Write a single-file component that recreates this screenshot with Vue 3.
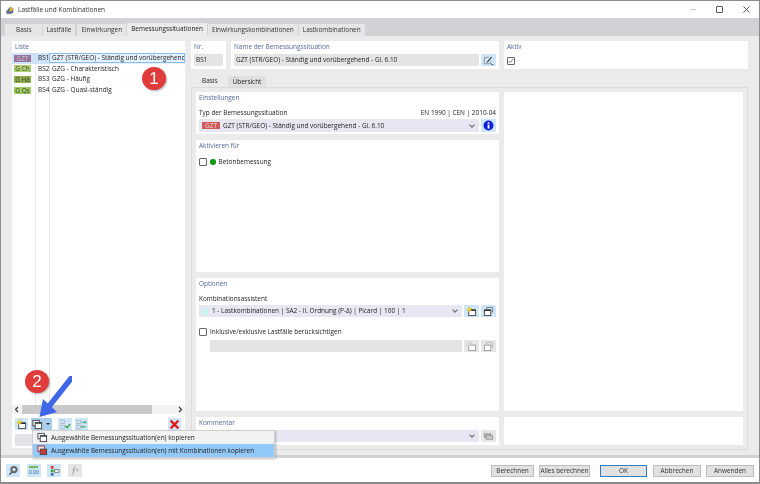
<script setup>
const tabs = ['Basis', 'Lastfälle', 'Einwirkungen', 'Bemessungssituationen', 'Einwirkungskombinationen', 'Lastkombinationen']
const rows = [
  { tag: 'GZT', color: '#96719a', nr: 'BS1', name: 'GZT (STR/GEO) - Ständig und vorübergehend' },
  { tag: 'G Ch', color: '#abd070', nr: 'BS2', name: 'GZG - Charakteristisch' },
  { tag: 'G Hä', color: '#8fb04c', nr: 'BS3', name: 'GZG - Häufig' },
  { tag: 'G Qs', color: '#a0cc60', nr: 'BS4', name: 'GZG - Quasi-ständig' }
]
</script>

<template>
  <div class="window">
    <div class="titlebar">
      <svg class="appicon" viewBox="0 0 12 12">
        <path d="M1 8l5-6 4 2v5l-4 2z" fill="#4a6f9c" />
        <path d="M6 2l4 2-2 4-3-1z" fill="#e4b03c" />
        <circle cx="3.5" cy="9" r="2" fill="#7d7d80" />
      </svg>
      <span class="title">Lastfälle und Kombinationen</span>
      <div class="winbtns">
        <span class="wmin"></span>
        <span class="wmax"></span>
        <svg class="wclose" viewBox="0 0 8 8"><path d="M.5.5l7 7M7.5.5l-7 7" stroke="#444" fill="none" /></svg>
      </div>
    </div>

    <div class="tabbar">
      <span v-for="t in tabs" :key="t" class="tab" :class="{ on: t === 'Bemessungssituationen' }">{{ t }}</span>
    </div>

    <div class="content">
      <div class="left">
        <div class="head liste">Liste</div>
        <div class="list">
          <div v-for="(r, i) in rows" :key="r.nr" class="lrow" :class="{ sel: i === 0 }">
            <span class="ltag"><span class="tag" :style="{ background: r.color }">{{ r.tag }}</span></span>
            <span class="lnr">{{ r.nr }}</span>
            <span class="lname">{{ r.name }}</span>
          </div>
        </div>
        <div class="hscroll">
          <svg class="arr" viewBox="0 0 10 9"><path d="M6 2L3.500 4.500 6 7" fill="none" stroke="#333" stroke-width="1.100" /></svg>
          <div class="track"><div class="thumb"></div></div>
          <svg class="arr" viewBox="0 0 10 9"><path d="M4 2l2.500 2.500L4 7" fill="none" stroke="#333" stroke-width="1.100" /></svg>
        </div>
        <div class="ltools">
          <span class="ibtn">
            <svg viewBox="0 0 12 12"><rect x="3" y="4.500" width="7.500" height="6" fill="#fff" stroke="#444" /><path d="M3 4.500h7.500" stroke="#222" stroke-width="1.500" /><path d="M3.500.5l.8 1.900 2-.3-1.200 1.600 1 1.800-2-.5-1.400 1.500-.2-2L.6 3.700l1.900-.8z" fill="#f5dc2e" stroke="#c9a81c" stroke-width=".3" /></svg>
          </span>
          <span class="ibtn split">
            <svg viewBox="0 0 12 12"><rect x="1" y="1.500" width="7" height="6" fill="#fff" stroke="#444" /><rect x="3.500" y="4" width="7" height="6.500" fill="#fff" stroke="#444" /><path d="M3.500 4.500h7" stroke="#222" stroke-width="1.200" /></svg>
            <i class="caret"></i>
          </span>
          <span class="ibtn mlarge">
            <svg viewBox="0 0 12 12"><path d="M1 1.500h4v3.500H1zM1 7h4v3.500H1z" fill="none" stroke="#888" stroke-width=".7" stroke-dasharray="1 .6" /><path d="M6 7.500l1.800 2 3.200-4" fill="none" stroke="#2a9a2a" stroke-width="1.300" /></svg>
          </span>
          <span class="ibtn">
            <svg viewBox="0 0 12 12"><path d="M1 1.500h4v3.500H1zM1 7h4v3.500H1z" fill="none" stroke="#888" stroke-width=".7" stroke-dasharray="1 .6" /><path d="M6 3.500h5M6 8.500h5M9.500 2l1.500 1.500-1.500 1.500M7.500 7L6 8.500 7.500 10" fill="none" stroke="#2a9a4a" stroke-width=".9" /></svg>
          </span>
          <span class="ibtn del">
            <svg viewBox="0 0 10 10"><path d="M1.500 1.500l7 7M8.500 1.500l-7 7" stroke="#e01818" stroke-width="2" /></svg>
          </span>
        </div>
        <div class="lfoot"><span class="lfootbtn"></span></div>
      </div>

      <div class="right">
        <div class="toprow">
          <div class="panel pnr">
            <div class="head">Nr.</div>
            <div class="field">BS1</div>
          </div>
          <div class="panel pname">
            <div class="head">Name der Bemessungssituation</div>
            <div class="line">
              <div class="field grow">GZT (STR/GEO) - Ständig und vorübergehend - Gl. 6.10</div>
              <span class="ibtn">
                <svg viewBox="0 0 12 12"><path d="M6.500 2.500h-5v7h7V7" fill="none" stroke="#777" stroke-width=".8" /><path d="M4.500 8l5-6" stroke="#333" stroke-width="1.100" /><path d="M9 10.500h2.500" stroke="#333" stroke-width=".8" /></svg>
              </span>
            </div>
          </div>
          <div class="panel paktiv">
            <div class="head">Aktiv</div>
            <span class="check checked">
              <svg viewBox="0 0 8 8"><path d="M1 4l2 2 4-5" fill="none" stroke="#444" /></svg>
            </span>
          </div>
        </div>

        <div class="subtabs">
          <span class="stab on">Basis</span>
          <span class="stab">Übersicht</span>
        </div>

        <div class="tabbody">
          <div class="cols">
            <div class="colmain">
              <div class="panel einst">
                <div class="head">Einstellungen</div>
                <div class="labelline"><span>Typ der Bemessungssituation</span><span>EN 1990 | CEN | 2010-04</span></div>
                <div class="line">
                  <div class="combo grow tall">
                    <span class="tag red">GZT</span>
                    <span class="ctext">GZT (STR/GEO) - Ständig und vorübergehend - Gl. 6.10</span>
                    <i class="chev"></i>
                  </div>
                  <span class="ibtn tall">
                    <svg viewBox="0 0 12 12"><circle cx="6" cy="6" r="5.400" fill="#0b1fd8" /><rect x="5" y="5" width="2" height="4.400" fill="#fff" /><rect x="5" y="2.500" width="2" height="1.600" fill="#fff" /></svg>
                  </span>
                </div>
              </div>

              <div class="panel aktiv">
                <div class="head">Aktivieren für</div>
                <div class="checkline">
                  <span class="check"></span>
                  <i class="dot"></i>
                  <span>Betonbemessung</span>
                </div>
              </div>

              <div class="panel optionen">
                <div class="head">Optionen</div>
                <div class="label">Kombinationsassistent</div>
                <div class="line kombi">
                  <div class="combo grow">
                    <i class="swatch"></i>
                    <span class="ctext wide">1 - Lastkombinationen | SA2 - II. Ordnung (P-Δ) | Picard | 100 | 1</span>
                    <i class="chev"></i>
                  </div>
                  <span class="ibtn">
                    <svg viewBox="0 0 12 12"><rect x="3" y="4.500" width="7.500" height="6" fill="#fff" stroke="#444" /><path d="M3 4.500h7.500" stroke="#222" stroke-width="1.500" /><path d="M3.500.5l.8 1.900 2-.3-1.200 1.600 1 1.800-2-.5-1.400 1.500-.2-2L.6 3.700l1.900-.8z" fill="#f5dc2e" stroke="#c9a81c" stroke-width=".3" /></svg>
                  </span>
                  <span class="ibtn">
                    <svg viewBox="0 0 12 12"><rect x="1.500" y="4.500" width="7" height="6" fill="#fff" stroke="#444" /><path d="M1.500 4.500h7" stroke="#222" stroke-width="1.500" /><path d="M4 3V1.500h6.500v5H9" fill="none" stroke="#555" stroke-width=".8" /></svg>
                  </span>
                </div>
                <div class="checkline incl">
                  <span class="check"></span>
                  <span>Inklusive/exklusive Lastfälle berücksichtigen</span>
                </div>
                <div class="line indent">
                  <div class="field grow"></div>
                  <span class="ibtn off">
                    <svg viewBox="0 0 12 12"><rect x="3" y="4.500" width="7.500" height="6" fill="#fff" stroke="#999" /><path d="M3.500.5l.8 1.900 2-.3-1.200 1.600 1 1.800-2-.5-1.400 1.500-.2-2L.6 3.700l1.900-.8z" fill="#ddd" stroke="#aaa" stroke-width=".3" /></svg>
                  </span>
                  <span class="ibtn off">
                    <svg viewBox="0 0 12 12"><rect x="1.500" y="4.500" width="7" height="6" fill="#fff" stroke="#999" /><path d="M4 3V1.500h6.500v5H9" fill="none" stroke="#aaa" stroke-width=".8" /></svg>
                  </span>
                </div>
              </div>

              <div class="panel komm">
                <div class="head">Kommentar</div>
                <div class="line">
                  <div class="combo grow"><i class="chev"></i></div>
                  <span class="ibtn off">
                    <svg viewBox="0 0 12 12"><rect x="1.500" y="3" width="7" height="4" fill="#bbb" stroke="#999" /><rect x="3.500" y="5" width="7" height="4" fill="#ccc" stroke="#999" /></svg>
                  </span>
                </div>
              </div>
            </div>

            <div class="colside">
              <div class="panel sidetop"></div>
              <div class="panel sidebot"></div>
            </div>
          </div>
        </div>
      </div>
    </div>

    <div class="footer">
      <div class="ficons">
        <span class="ibtn">
          <svg viewBox="0 0 12 12"><circle cx="6.500" cy="5" r="4" fill="#666" /><circle cx="6.500" cy="5" r="1.800" fill="#d5e8f8" /><path d="M4 8l-2.500 2.500" stroke="#333" stroke-width="1.400" /></svg>
        </span>
        <span class="ibtn">
          <svg viewBox="0 0 12 12"><rect x="1" y="1" width="10" height="2.500" fill="#7cb860" /><text x="1" y="9.500" font-size="5.500" fill="#2a5e9a" font-family="Liberation Sans, sans-serif">0.00</text></svg>
        </span>
        <span class="ibtn">
          <svg viewBox="0 0 12 12"><rect x="2" y="1" width="3" height="3" fill="#d33" /><rect x="2" y="5" width="3" height="3" fill="#3a3" /><rect x="2" y="9" width="3" height="2.500" fill="#36b" /><path d="M6 5h5v3H6z" fill="#fff" stroke="#444" stroke-width=".7" /></svg>
        </span>
        <span class="ibtn off">
          <svg viewBox="0 0 12 12"><path d="M3 10.500c2 0 1.500-2 2-4.500s.5-4 2.500-4" fill="none" stroke="#999" /><path d="M3.500 5h3.500M8 4l2 3M10 4L8 7" stroke="#aaa" stroke-width=".8" fill="none" /></svg>
        </span>
      </div>
      <div class="fbtns">
        <span class="btn">Berechnen</span>
        <span class="btn all">Alles berechnen</span>
        <span class="btn ok">OK</span>
        <span class="btn act">Abbrechen</span>
        <span class="btn act">Anwenden</span>
      </div>
    </div>

    <!-- context menu and callouts lie over the dialog -->
    <div class="menu">
      <div class="mitem">
        <span class="micon">
          <svg viewBox="0 0 12 12"><rect x="1" y="1.500" width="7" height="6" fill="#fff" stroke="#445" /><rect x="3.500" y="4" width="7" height="6.500" fill="#fff" stroke="#445" /><path d="M3.500 4.500h7" stroke="#334" stroke-width="1.200" /></svg>
        </span>
        Ausgewählte Bemessungssituation(en) kopieren
      </div>
      <div class="mitem hot">
        <span class="micon">
          <svg viewBox="0 0 12 12"><rect x="1" y="1" width="7" height="6" fill="#e8e8f0" stroke="#b02a2a" /><rect x="3.500" y="4.500" width="7" height="6" fill="#c83a3a" stroke="#444" /></svg>
        </span>
        Ausgewählte Bemessungssituation(en) mit Kombinationen kopieren
      </div>
    </div>

    <span class="badge b1">1</span>
    <span class="badge b2">2</span>
    <svg class="arrow" viewBox="0 0 34 42">
      <path d="M33 2.500L12 29" stroke="#3f67e8" stroke-width="5.500" stroke-linecap="round" fill="none" />
      <path d="M1.500 41L5 23 19 36z" fill="#3f67e8" />
    </svg>
  </div>
</template>

<style>
html, body { margin: 0; background: #fff; }
</style>

<style scoped>
.window {
  position: relative;
  width: 760px;
  height: 484px;
  box-sizing: border-box;
  border: 1px solid #8c8c8c;
  border-bottom-width: 2px;
  display: flex;
  flex-direction: column;
  overflow: hidden;
  background: #fff;
  font-family: "Open Sans", "Noto Sans", sans-serif;
  font-size: 6.45px;
  color: #222;
  line-height: 10px;
  filter: blur(.3px);
}
svg { display: block; }

.titlebar {
  height: 17px;
  display: flex;
  align-items: center;
  padding-left: 4px;
  flex: none;
}
.appicon { width: 10px; height: 10px; margin-right: 3px; }
.title { font-size: 6.500px; color: #333; }
.winbtns { margin-left: auto; display: flex; align-items: center; gap: 20px; padding-right: 9px; }
.wmin { width: 6px; height: 1px; background: #ccc; }
.wmax { width: 5px; height: 5px; border: 1px solid #555; border-radius: 1px; }
.wclose { width: 7px; height: 7px; }

.tabbar {
  height: 18px;
  background: #d2d2d6;
  display: flex;
  align-items: flex-end;
  padding-left: 4px;
  flex: none;
}
.tab {
  height: 12px;
  line-height: 12px;
  padding: 0 4px;
  margin-right: 1px;
  background: #e6e6e6;
  color: #333;
}
.tab:nth-child(1) { padding: 0 10px 0 11px; }
.tab:nth-child(2) { margin-right: 2px; }
.tab.on { height: 13px; background: #ebebeb; color: #222; }

.content {
  flex: 1;
  min-height: 0;
  background: #ebebeb;
  display: flex;
  gap: 6px;
  padding: 5px 11px 5px 11px;
  border-bottom: 3px solid #d2d2d6;
}

.head { color: #55659a; height: 10px; }
.left {
  width: 173px;
  flex: none;
  background: #fff;
  display: flex;
  flex-direction: column;
  padding-top: 1px;
  margin-bottom: 2px;
}
.liste { padding-left: 3px; margin-bottom: 1px; }
.list {
  flex: 1;
  background: linear-gradient(to right, #fff 23px, #e8e8e8 23px, #e8e8e8 24px, #fff 24px, #fff 37px, #e8e8e8 37px, #e8e8e8 38px, #fff 38px);
  overflow: hidden;
}
.lrow { height: 10.6px; display: flex; align-items: center; white-space: nowrap; }
.lrow.sel { background: linear-gradient(to right, #cfe3f8 37px, #e5f1fc 37px); }
.ltag { width: 23px; flex: none; padding-left: 2px; box-sizing: border-box; }
.tag {
  display: block;
  width: 17px;
  height: 7px;
  line-height: 7px;
  font-size: 6.4px;
  text-align: center;
  color: #3f4030;
}
.lrow.sel .tag { color: #cfc6d0; }
.lnr { width: 14px; flex: none; padding-left: 3px; box-sizing: border-box; }
.lname { padding-left: 3px; flex: 1; min-width: 0; overflow: hidden; box-sizing: border-box; }
.lrow.sel .lname { outline: 1px solid #8bbbe6; outline-offset: -1px; }

.hscroll { height: 9px; display: flex; align-items: center; background: #f3f3f3; flex: none; }
.arr { width: 10px; height: 9px; flex: none; }
.track { flex: 1; height: 9px; }
.thumb { width: 130px; height: 9px; background: #c9c9c9; }

.ltools {
  height: 17px;
  flex: none;
  display: flex;
  align-items: center;
  padding: 3px 3px 0;
  box-sizing: border-box;
  gap: 3px;
}
.ibtn {
  width: 15px;
  height: 12px;
  background: #cfe6f9;
  display: flex;
  align-items: center;
  justify-content: center;
  flex: none;
}
.ibtn svg { width: 11px; height: 11px; }
.ibtn.off { background: #e6e6e6; }
.ltools .ibtn { width: 13px; }
.ltools .ibtn.split { width: 21px; background: #a9cfec; justify-content: flex-start; padding-left: 1px; box-sizing: border-box; gap: 3px; }
.caret { border: 2px solid transparent; border-top: 2.500px solid #222; border-bottom: 0; }
.ltools .mlarge { margin-left: 3px; width: 14px; }
.ltools .del { margin-left: auto; margin-right: 1px; }
.lfoot { height: 17px; flex: none; padding: 3px 3px 0; box-sizing: border-box; }
.lfootbtn { display: block; height: 12px; width: 150px; background: #e2e2e8; }

.right { flex: 1; min-width: 0; display: flex; flex-direction: column; }
.toprow { display: flex; gap: 5px; height: 28px; flex: none; }
.panel { background: #fff; box-sizing: border-box; padding: 1px 3px 0; }
.pnr { width: 35px; }
.pname { width: 268px; }
.paktiv { flex: 1; }
.line { display: flex; gap: 2px; align-items: center; }
.grow { flex: 1; min-width: 0; }
.field {
  height: 12px;
  line-height: 12px;
  margin-top: 2px;
  padding-left: 2px;
  background: #e4e4e4;
}
.line .field { margin-top: 0; }
.pname .line { margin-top: 2px; }
.check {
  display: inline-block;
  width: 6px;
  height: 6px;
  border: 1px solid #666;
  border-radius: 1px;
  background: #fff;
  flex: none;
}
.check svg { width: 6px; height: 6px; }
.checked { margin-top: 5px; }

.subtabs { height: 12px; margin-top: 6px; display: flex; align-items: flex-end; flex: none; }
.stab { height: 11px; line-height: 11px; padding: 0 5px; background: #e0e0e0; }
.stab.on { height: 12px; line-height: 12px; background: #ebebeb; padding: 0 10px 0 11px; }
.tabbody {
  flex: 1;
  min-height: 0;
  border: 1px solid #dcdcdc;
  padding: 4px;
  box-sizing: border-box;
}
.cols { display: flex; gap: 5px; height: 100%; }
.colmain { width: 303px; display: flex; flex-direction: column; gap: 6px; flex: none; }
.colside { flex: 1; display: flex; flex-direction: column; gap: 6px; }
.sidetop { flex: 1; }
.sidebot { height: 28px; flex: none; }

.einst { height: 42px; }
.labelline { display: flex; justify-content: space-between; margin-top: 5px; height: 10px; }
.label { margin-top: 5px; height: 10px; }
.einst .line { margin-top: 1px; }
.kombi { margin-top: 1px; }
.combo {
  height: 12px;
  background: #e6e7f2;
  display: flex;
  align-items: center;
  padding-left: 3px;
}
.tall { height: 13px; }
.ctext { margin-left: 3px; }
.ctext.wide { margin-left: 4px; }
.tag.red { background: #d0595c; color: #f3d6d6; width: 18px; }
.chev {
  margin-left: auto;
  margin-right: 5px;
  width: 3px;
  height: 3px;
  margin-top: -2px;
  border-right: 1px solid #666;
  border-bottom: 1px solid #666;
  transform: rotate(45deg);
}
.swatch { width: 6px; height: 7px; background: #cdf3f5; }
.aktiv { height: 132px; }
.checkline { display: flex; align-items: center; gap: 3px; margin-top: 6px; height: 10px; }
.dot { width: 5.500px; height: 5.500px; border-radius: 50%; background: #0f9a0f; }
.optionen { height: 133px; }
.incl { margin-top: 10px; }
.indent { margin-top: 3px; padding-left: 11px; }
.komm { flex: 1; }
.komm .line { margin-top: 2px; }

.footer {
  height: 24px;
  box-sizing: border-box;
  flex: none;
  display: flex;
  align-items: center;
  padding: 1px 5px 0;
}
.ficons { display: flex; gap: 6.500px; }
.ficons .ibtn { width: 14px; height: 13px; }
.fbtns { margin-left: auto; display: flex; gap: 5px; }
.btn {
  width: 41px;
  height: 10px;
  line-height: 10px;
  background: #e1e1e1;
  border: 1px solid #bdbdbd;
  color: #333;
  text-align: center;
}
.btn.all { width: 49px; }
.btn.ok { width: 45px; border-color: #2f7fc8; margin: 0 1px 0 5px; }
.btn.act { width: 46px; }

.menu {
  position: absolute;
  left: 31px;
  top: 429px;
  width: 241px;
  background: #f2f2f2;
  border: 1px solid #cfcfcf;
  box-shadow: 1px 1px 2px rgba(0, 0, 0, .25);
}
.mitem { height: 13px; display: flex; align-items: center; }
.mitem.hot { background: #93c9f8; }
.micon { width: 18px; display: flex; justify-content: center; flex: none; }
.micon svg { width: 11px; height: 11px; }

.badge {
  position: absolute;
  width: 24px;
  height: 23px;
  border-radius: 50%;
  background: #e03c3c;
  color: #fff;
  font-family: "Liberation Sans", sans-serif;
  font-size: 17px;
  line-height: 23px;
  text-align: center;
  box-shadow: 1px 1px 2px rgba(0, 0, 0, .3);
}
.b1 { left: 141px; top: 66px; }
.b2 { left: 24px; top: 369px; }
.arrow { position: absolute; left: 37px; top: 375px; width: 34px; height: 42px; }
</style>
